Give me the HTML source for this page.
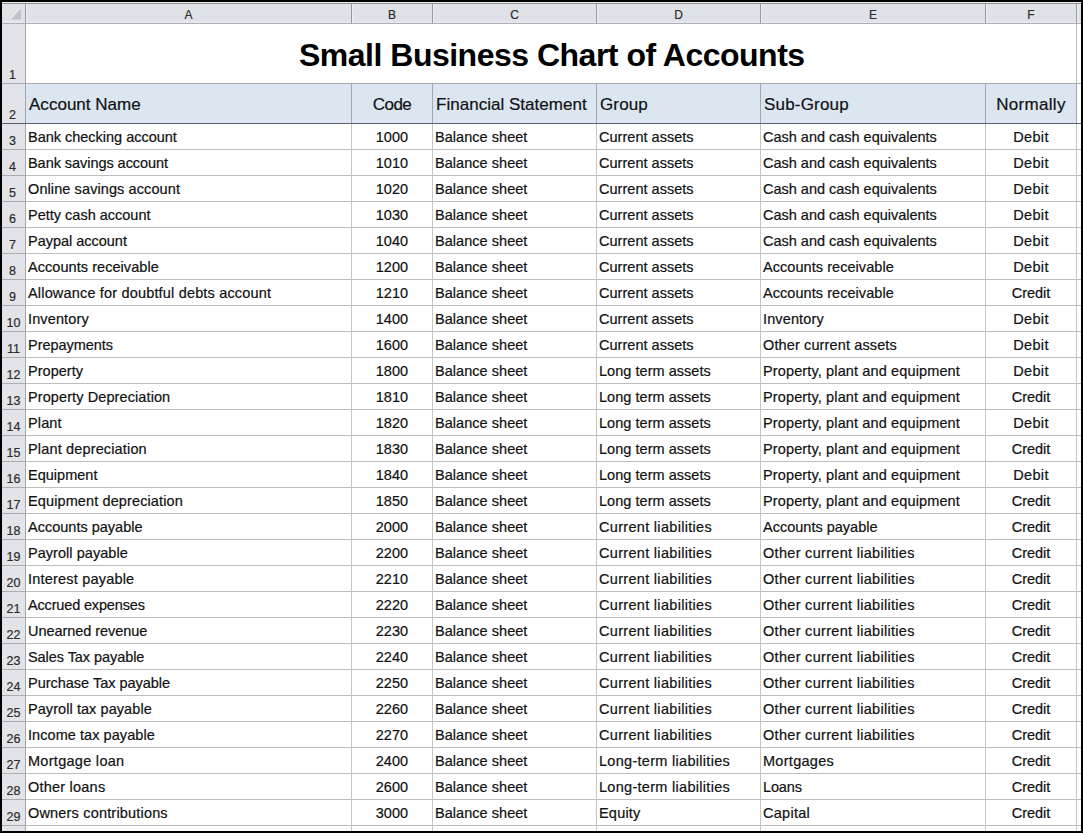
<!DOCTYPE html>
<html><head><meta charset="utf-8"><style>
html,body{margin:0;padding:0;width:1083px;height:833px;overflow:hidden;background:#fff}
#s{position:relative;width:1083px;height:833px;overflow:hidden}
#s div{position:absolute}
#s span{position:absolute;white-space:nowrap;font-family:"Liberation Sans",sans-serif;line-height:1}
.ch{font-size:12px;color:#2c2c2c;-webkit-text-stroke:0.2px #2c2c2c}
.rn{font-size:12.5px;color:#2c2c2c;-webkit-text-stroke:0.2px #2c2c2c}
.title{font-size:32px;font-weight:700;color:#000;letter-spacing:-0.5px}
.hd{font-size:17px;color:#111;-webkit-text-stroke:0.2px #111}
.td{font-size:14.5px;color:#111111;-webkit-text-stroke:0.2px #111111}
</style></head><body><div id="s">
<div style="left:0px;top:0px;width:1083px;height:833px;background:#ffffff;"></div>
<div style="left:2px;top:2px;width:1079px;height:22px;background:#dfe3e7;"></div>
<div style="left:2px;top:2px;width:1079px;height:1px;background:#eceef0;"></div>
<div style="left:2px;top:3px;width:1079px;height:1px;background:#8e9195;"></div>
<div style="left:2px;top:16px;width:1079px;height:5px;background:#e0e1e8;"></div>
<div style="left:2px;top:21px;width:1079px;height:2px;background:#e6e7ea;"></div>
<div style="left:2px;top:23px;width:1079px;height:1px;background:#aeb1b5;"></div>
<div style="left:2px;top:24px;width:23px;height:807px;background:#e2e4e9;"></div>
<div style="left:26px;top:84px;width:1050px;height:39px;background:#dce6f1;"></div>
<div style="left:25px;top:4px;width:1px;height:19px;background:#96999d;"></div>
<div style="left:26px;top:4px;width:1px;height:19px;background:#eceef1;"></div>
<div style="left:351px;top:4px;width:1px;height:19px;background:#96999d;"></div>
<div style="left:352px;top:4px;width:1px;height:19px;background:#eceef1;"></div>
<div style="left:432px;top:4px;width:1px;height:19px;background:#96999d;"></div>
<div style="left:433px;top:4px;width:1px;height:19px;background:#eceef1;"></div>
<div style="left:596px;top:4px;width:1px;height:19px;background:#96999d;"></div>
<div style="left:597px;top:4px;width:1px;height:19px;background:#eceef1;"></div>
<div style="left:760px;top:4px;width:1px;height:19px;background:#96999d;"></div>
<div style="left:761px;top:4px;width:1px;height:19px;background:#eceef1;"></div>
<div style="left:985px;top:4px;width:1px;height:19px;background:#96999d;"></div>
<div style="left:986px;top:4px;width:1px;height:19px;background:#eceef1;"></div>
<div style="left:1076px;top:4px;width:1px;height:19px;background:#96999d;"></div>
<div style="left:1077px;top:4px;width:1px;height:19px;background:#eceef1;"></div>
<svg style="position:absolute;left:0;top:0" width="30" height="30"><line x1="9.5" y1="19.5" x2="20.5" y2="8" stroke="#eceef1" stroke-width="1"/><polygon points="21,8.5 21,19.5 11,19.5" fill="#bfc2c6"/></svg>
<div style="left:25px;top:24px;width:1px;height:807px;background:#a3a6ad;"></div>
<div style="left:26px;top:83px;width:1055px;height:1px;background:#a9adb1;"></div>
<div style="left:2px;top:83px;width:23px;height:1px;background:#abaeb2;"></div>
<div style="left:26px;top:149px;width:1055px;height:1px;background:#bdbdbd;"></div>
<div style="left:2px;top:149px;width:23px;height:1px;background:#abaeb2;"></div>
<div style="left:26px;top:175px;width:1055px;height:1px;background:#bdbdbd;"></div>
<div style="left:2px;top:175px;width:23px;height:1px;background:#abaeb2;"></div>
<div style="left:26px;top:201px;width:1055px;height:1px;background:#bdbdbd;"></div>
<div style="left:2px;top:201px;width:23px;height:1px;background:#abaeb2;"></div>
<div style="left:26px;top:227px;width:1055px;height:1px;background:#bdbdbd;"></div>
<div style="left:2px;top:227px;width:23px;height:1px;background:#abaeb2;"></div>
<div style="left:26px;top:253px;width:1055px;height:1px;background:#bdbdbd;"></div>
<div style="left:2px;top:253px;width:23px;height:1px;background:#abaeb2;"></div>
<div style="left:26px;top:279px;width:1055px;height:1px;background:#bdbdbd;"></div>
<div style="left:2px;top:279px;width:23px;height:1px;background:#abaeb2;"></div>
<div style="left:26px;top:305px;width:1055px;height:1px;background:#bdbdbd;"></div>
<div style="left:2px;top:305px;width:23px;height:1px;background:#abaeb2;"></div>
<div style="left:26px;top:331px;width:1055px;height:1px;background:#bdbdbd;"></div>
<div style="left:2px;top:331px;width:23px;height:1px;background:#abaeb2;"></div>
<div style="left:26px;top:357px;width:1055px;height:1px;background:#bdbdbd;"></div>
<div style="left:2px;top:357px;width:23px;height:1px;background:#abaeb2;"></div>
<div style="left:26px;top:383px;width:1055px;height:1px;background:#bdbdbd;"></div>
<div style="left:2px;top:383px;width:23px;height:1px;background:#abaeb2;"></div>
<div style="left:26px;top:409px;width:1055px;height:1px;background:#bdbdbd;"></div>
<div style="left:2px;top:409px;width:23px;height:1px;background:#abaeb2;"></div>
<div style="left:26px;top:435px;width:1055px;height:1px;background:#bdbdbd;"></div>
<div style="left:2px;top:435px;width:23px;height:1px;background:#abaeb2;"></div>
<div style="left:26px;top:461px;width:1055px;height:1px;background:#bdbdbd;"></div>
<div style="left:2px;top:461px;width:23px;height:1px;background:#abaeb2;"></div>
<div style="left:26px;top:487px;width:1055px;height:1px;background:#bdbdbd;"></div>
<div style="left:2px;top:487px;width:23px;height:1px;background:#abaeb2;"></div>
<div style="left:26px;top:513px;width:1055px;height:1px;background:#bdbdbd;"></div>
<div style="left:2px;top:513px;width:23px;height:1px;background:#abaeb2;"></div>
<div style="left:26px;top:539px;width:1055px;height:1px;background:#bdbdbd;"></div>
<div style="left:2px;top:539px;width:23px;height:1px;background:#abaeb2;"></div>
<div style="left:26px;top:565px;width:1055px;height:1px;background:#bdbdbd;"></div>
<div style="left:2px;top:565px;width:23px;height:1px;background:#abaeb2;"></div>
<div style="left:26px;top:591px;width:1055px;height:1px;background:#bdbdbd;"></div>
<div style="left:2px;top:591px;width:23px;height:1px;background:#abaeb2;"></div>
<div style="left:26px;top:617px;width:1055px;height:1px;background:#bdbdbd;"></div>
<div style="left:2px;top:617px;width:23px;height:1px;background:#abaeb2;"></div>
<div style="left:26px;top:643px;width:1055px;height:1px;background:#bdbdbd;"></div>
<div style="left:2px;top:643px;width:23px;height:1px;background:#abaeb2;"></div>
<div style="left:26px;top:669px;width:1055px;height:1px;background:#bdbdbd;"></div>
<div style="left:2px;top:669px;width:23px;height:1px;background:#abaeb2;"></div>
<div style="left:26px;top:695px;width:1055px;height:1px;background:#bdbdbd;"></div>
<div style="left:2px;top:695px;width:23px;height:1px;background:#abaeb2;"></div>
<div style="left:26px;top:721px;width:1055px;height:1px;background:#bdbdbd;"></div>
<div style="left:2px;top:721px;width:23px;height:1px;background:#abaeb2;"></div>
<div style="left:26px;top:747px;width:1055px;height:1px;background:#bdbdbd;"></div>
<div style="left:2px;top:747px;width:23px;height:1px;background:#abaeb2;"></div>
<div style="left:26px;top:773px;width:1055px;height:1px;background:#bdbdbd;"></div>
<div style="left:2px;top:773px;width:23px;height:1px;background:#abaeb2;"></div>
<div style="left:26px;top:799px;width:1055px;height:1px;background:#bdbdbd;"></div>
<div style="left:2px;top:799px;width:23px;height:1px;background:#abaeb2;"></div>
<div style="left:26px;top:825px;width:1055px;height:1px;background:#bdbdbd;"></div>
<div style="left:2px;top:825px;width:23px;height:1px;background:#abaeb2;"></div>
<div style="left:351px;top:84px;width:1px;height:747px;background:#c6c6c6;"></div>
<div style="left:351px;top:84px;width:1px;height:39px;background:#9ea7b2;"></div>
<div style="left:432px;top:84px;width:1px;height:747px;background:#c6c6c6;"></div>
<div style="left:432px;top:84px;width:1px;height:39px;background:#9ea7b2;"></div>
<div style="left:596px;top:84px;width:1px;height:747px;background:#c6c6c6;"></div>
<div style="left:596px;top:84px;width:1px;height:39px;background:#9ea7b2;"></div>
<div style="left:760px;top:84px;width:1px;height:747px;background:#c6c6c6;"></div>
<div style="left:760px;top:84px;width:1px;height:39px;background:#9ea7b2;"></div>
<div style="left:985px;top:84px;width:1px;height:747px;background:#c6c6c6;"></div>
<div style="left:985px;top:84px;width:1px;height:39px;background:#9ea7b2;"></div>
<div style="left:1076px;top:84px;width:1px;height:747px;background:#c6c6c6;"></div>
<div style="left:1076px;top:84px;width:1px;height:39px;background:#9ea7b2;"></div>
<div style="left:1076px;top:24px;width:1px;height:60px;background:#bdbdbd;"></div>
<div style="left:2px;top:123px;width:1079px;height:1px;background:#5b6167;"></div>
<div style="left:0px;top:0px;width:1083px;height:2px;background:#000;"></div>
<div style="left:0px;top:831px;width:1083px;height:2px;background:#000;"></div>
<div style="left:0px;top:0px;width:2px;height:833px;background:#000;"></div>
<div style="left:1081px;top:0px;width:2px;height:833px;background:#000;"></div>
<span class="ch" style="left:26px;top:9px;width:325px;text-align:center;">A</span>
<span class="ch" style="left:352px;top:9px;width:80px;text-align:center;">B</span>
<span class="ch" style="left:433px;top:9px;width:163px;text-align:center;">C</span>
<span class="ch" style="left:597px;top:9px;width:163px;text-align:center;">D</span>
<span class="ch" style="left:761px;top:9px;width:224px;text-align:center;">E</span>
<span class="ch" style="left:986px;top:9px;width:90px;text-align:center;">F</span>
<span class="rn" style="left:1px;top:69px;width:23px;text-align:center;">1</span>
<span class="rn" style="left:1px;top:109px;width:23px;text-align:center;">2</span>
<span class="rn" style="left:1px;top:135px;width:23px;text-align:center;">3</span>
<span class="rn" style="left:1px;top:161px;width:23px;text-align:center;">4</span>
<span class="rn" style="left:1px;top:187px;width:23px;text-align:center;">5</span>
<span class="rn" style="left:1px;top:213px;width:23px;text-align:center;">6</span>
<span class="rn" style="left:1px;top:239px;width:23px;text-align:center;">7</span>
<span class="rn" style="left:1px;top:265px;width:23px;text-align:center;">8</span>
<span class="rn" style="left:1px;top:291px;width:23px;text-align:center;">9</span>
<span class="rn" style="left:2px;top:317px;width:23px;text-align:center;">10</span>
<span class="rn" style="left:2px;top:343px;width:23px;text-align:center;">11</span>
<span class="rn" style="left:2px;top:369px;width:23px;text-align:center;">12</span>
<span class="rn" style="left:2px;top:395px;width:23px;text-align:center;">13</span>
<span class="rn" style="left:2px;top:421px;width:23px;text-align:center;">14</span>
<span class="rn" style="left:2px;top:447px;width:23px;text-align:center;">15</span>
<span class="rn" style="left:2px;top:473px;width:23px;text-align:center;">16</span>
<span class="rn" style="left:2px;top:499px;width:23px;text-align:center;">17</span>
<span class="rn" style="left:2px;top:525px;width:23px;text-align:center;">18</span>
<span class="rn" style="left:2px;top:551px;width:23px;text-align:center;">19</span>
<span class="rn" style="left:2px;top:577px;width:23px;text-align:center;">20</span>
<span class="rn" style="left:2px;top:603px;width:23px;text-align:center;">21</span>
<span class="rn" style="left:2px;top:629px;width:23px;text-align:center;">22</span>
<span class="rn" style="left:2px;top:655px;width:23px;text-align:center;">23</span>
<span class="rn" style="left:2px;top:681px;width:23px;text-align:center;">24</span>
<span class="rn" style="left:2px;top:707px;width:23px;text-align:center;">25</span>
<span class="rn" style="left:2px;top:733px;width:23px;text-align:center;">26</span>
<span class="rn" style="left:2px;top:759px;width:23px;text-align:center;">27</span>
<span class="rn" style="left:2px;top:785px;width:23px;text-align:center;">28</span>
<span class="rn" style="left:2px;top:811px;width:23px;text-align:center;">29</span>
<span class="rn" style="left:2px;top:837px;width:23px;text-align:center;">30</span>
<span class="title" style="left:299px;top:39px;">Small Business Chart of Accounts</span>
<span class="hd" style="left:29px;top:96px;letter-spacing:0.021px;">Account Name</span>
<span class="hd" style="left:352px;top:96px;letter-spacing:-0.581px;width:80px;text-align:center;">Code</span>
<span class="hd" style="left:436px;top:96px;letter-spacing:0.022px;">Financial Statement</span>
<span class="hd" style="left:600px;top:96px;letter-spacing:0.126px;">Group</span>
<span class="hd" style="left:764px;top:96px;letter-spacing:0.190px;">Sub-Group</span>
<span class="hd" style="left:986px;top:96px;letter-spacing:0.317px;width:90px;text-align:center;">Normally</span>
<span class="td" style="left:28px;top:130px;letter-spacing:-0.013px;">Bank checking account</span>
<span class="td" style="left:352px;top:130px;letter-spacing:0.060px;width:80px;text-align:center;">1000</span>
<span class="td" style="left:435px;top:130px;letter-spacing:0.042px;">Balance sheet</span>
<span class="td" style="left:599px;top:130px;letter-spacing:0.024px;">Current assets</span>
<span class="td" style="left:763px;top:130px;letter-spacing:-0.010px;">Cash and cash equivalents</span>
<span class="td" style="left:986px;top:130px;letter-spacing:0.348px;width:90px;text-align:center;">Debit</span>
<span class="td" style="left:28px;top:156px;letter-spacing:-0.050px;">Bank savings account</span>
<span class="td" style="left:352px;top:156px;letter-spacing:0.060px;width:80px;text-align:center;">1010</span>
<span class="td" style="left:435px;top:156px;letter-spacing:0.042px;">Balance sheet</span>
<span class="td" style="left:599px;top:156px;letter-spacing:0.024px;">Current assets</span>
<span class="td" style="left:763px;top:156px;letter-spacing:-0.010px;">Cash and cash equivalents</span>
<span class="td" style="left:986px;top:156px;letter-spacing:0.348px;width:90px;text-align:center;">Debit</span>
<span class="td" style="left:28px;top:182px;letter-spacing:0.097px;">Online savings account</span>
<span class="td" style="left:352px;top:182px;letter-spacing:0.060px;width:80px;text-align:center;">1020</span>
<span class="td" style="left:435px;top:182px;letter-spacing:0.042px;">Balance sheet</span>
<span class="td" style="left:599px;top:182px;letter-spacing:0.024px;">Current assets</span>
<span class="td" style="left:763px;top:182px;letter-spacing:-0.010px;">Cash and cash equivalents</span>
<span class="td" style="left:986px;top:182px;letter-spacing:0.348px;width:90px;text-align:center;">Debit</span>
<span class="td" style="left:28px;top:208px;letter-spacing:0.000px;">Petty cash account</span>
<span class="td" style="left:352px;top:208px;letter-spacing:0.060px;width:80px;text-align:center;">1030</span>
<span class="td" style="left:435px;top:208px;letter-spacing:0.042px;">Balance sheet</span>
<span class="td" style="left:599px;top:208px;letter-spacing:0.024px;">Current assets</span>
<span class="td" style="left:763px;top:208px;letter-spacing:-0.010px;">Cash and cash equivalents</span>
<span class="td" style="left:986px;top:208px;letter-spacing:0.348px;width:90px;text-align:center;">Debit</span>
<span class="td" style="left:28px;top:234px;letter-spacing:-0.016px;">Paypal account</span>
<span class="td" style="left:352px;top:234px;letter-spacing:0.060px;width:80px;text-align:center;">1040</span>
<span class="td" style="left:435px;top:234px;letter-spacing:0.042px;">Balance sheet</span>
<span class="td" style="left:599px;top:234px;letter-spacing:0.024px;">Current assets</span>
<span class="td" style="left:763px;top:234px;letter-spacing:-0.010px;">Cash and cash equivalents</span>
<span class="td" style="left:986px;top:234px;letter-spacing:0.348px;width:90px;text-align:center;">Debit</span>
<span class="td" style="left:28px;top:260px;letter-spacing:0.054px;">Accounts receivable</span>
<span class="td" style="left:352px;top:260px;letter-spacing:0.060px;width:80px;text-align:center;">1200</span>
<span class="td" style="left:435px;top:260px;letter-spacing:0.042px;">Balance sheet</span>
<span class="td" style="left:599px;top:260px;letter-spacing:0.024px;">Current assets</span>
<span class="td" style="left:763px;top:260px;letter-spacing:0.054px;">Accounts receivable</span>
<span class="td" style="left:986px;top:260px;letter-spacing:0.348px;width:90px;text-align:center;">Debit</span>
<span class="td" style="left:28px;top:286px;letter-spacing:0.172px;">Allowance for doubtful debts account</span>
<span class="td" style="left:352px;top:286px;letter-spacing:0.060px;width:80px;text-align:center;">1210</span>
<span class="td" style="left:435px;top:286px;letter-spacing:0.042px;">Balance sheet</span>
<span class="td" style="left:599px;top:286px;letter-spacing:0.024px;">Current assets</span>
<span class="td" style="left:763px;top:286px;letter-spacing:0.054px;">Accounts receivable</span>
<span class="td" style="left:986px;top:286px;letter-spacing:-0.034px;width:90px;text-align:center;">Credit</span>
<span class="td" style="left:28px;top:312px;letter-spacing:0.126px;">Inventory</span>
<span class="td" style="left:352px;top:312px;letter-spacing:0.060px;width:80px;text-align:center;">1400</span>
<span class="td" style="left:435px;top:312px;letter-spacing:0.042px;">Balance sheet</span>
<span class="td" style="left:599px;top:312px;letter-spacing:0.024px;">Current assets</span>
<span class="td" style="left:763px;top:312px;letter-spacing:0.126px;">Inventory</span>
<span class="td" style="left:986px;top:312px;letter-spacing:0.348px;width:90px;text-align:center;">Debit</span>
<span class="td" style="left:28px;top:338px;letter-spacing:-0.035px;">Prepayments</span>
<span class="td" style="left:352px;top:338px;letter-spacing:0.060px;width:80px;text-align:center;">1600</span>
<span class="td" style="left:435px;top:338px;letter-spacing:0.042px;">Balance sheet</span>
<span class="td" style="left:599px;top:338px;letter-spacing:0.024px;">Current assets</span>
<span class="td" style="left:763px;top:338px;letter-spacing:0.126px;">Other current assets</span>
<span class="td" style="left:986px;top:338px;letter-spacing:0.348px;width:90px;text-align:center;">Debit</span>
<span class="td" style="left:28px;top:364px;letter-spacing:0.033px;">Property</span>
<span class="td" style="left:352px;top:364px;letter-spacing:0.060px;width:80px;text-align:center;">1800</span>
<span class="td" style="left:435px;top:364px;letter-spacing:0.042px;">Balance sheet</span>
<span class="td" style="left:599px;top:364px;letter-spacing:0.037px;">Long term assets</span>
<span class="td" style="left:763px;top:364px;letter-spacing:0.130px;">Property, plant and equipment</span>
<span class="td" style="left:986px;top:364px;letter-spacing:0.348px;width:90px;text-align:center;">Debit</span>
<span class="td" style="left:28px;top:390px;letter-spacing:0.097px;">Property Depreciation</span>
<span class="td" style="left:352px;top:390px;letter-spacing:0.060px;width:80px;text-align:center;">1810</span>
<span class="td" style="left:435px;top:390px;letter-spacing:0.042px;">Balance sheet</span>
<span class="td" style="left:599px;top:390px;letter-spacing:0.037px;">Long term assets</span>
<span class="td" style="left:763px;top:390px;letter-spacing:0.130px;">Property, plant and equipment</span>
<span class="td" style="left:986px;top:390px;letter-spacing:-0.034px;width:90px;text-align:center;">Credit</span>
<span class="td" style="left:28px;top:416px;letter-spacing:0.129px;">Plant</span>
<span class="td" style="left:352px;top:416px;letter-spacing:0.060px;width:80px;text-align:center;">1820</span>
<span class="td" style="left:435px;top:416px;letter-spacing:0.042px;">Balance sheet</span>
<span class="td" style="left:599px;top:416px;letter-spacing:0.037px;">Long term assets</span>
<span class="td" style="left:763px;top:416px;letter-spacing:0.130px;">Property, plant and equipment</span>
<span class="td" style="left:986px;top:416px;letter-spacing:0.348px;width:90px;text-align:center;">Debit</span>
<span class="td" style="left:28px;top:442px;letter-spacing:0.153px;">Plant depreciation</span>
<span class="td" style="left:352px;top:442px;letter-spacing:0.060px;width:80px;text-align:center;">1830</span>
<span class="td" style="left:435px;top:442px;letter-spacing:0.042px;">Balance sheet</span>
<span class="td" style="left:599px;top:442px;letter-spacing:0.037px;">Long term assets</span>
<span class="td" style="left:763px;top:442px;letter-spacing:0.130px;">Property, plant and equipment</span>
<span class="td" style="left:986px;top:442px;letter-spacing:-0.034px;width:90px;text-align:center;">Credit</span>
<span class="td" style="left:28px;top:468px;letter-spacing:0.011px;">Equipment</span>
<span class="td" style="left:352px;top:468px;letter-spacing:0.060px;width:80px;text-align:center;">1840</span>
<span class="td" style="left:435px;top:468px;letter-spacing:0.042px;">Balance sheet</span>
<span class="td" style="left:599px;top:468px;letter-spacing:0.037px;">Long term assets</span>
<span class="td" style="left:763px;top:468px;letter-spacing:0.130px;">Property, plant and equipment</span>
<span class="td" style="left:986px;top:468px;letter-spacing:0.348px;width:90px;text-align:center;">Debit</span>
<span class="td" style="left:28px;top:494px;letter-spacing:0.113px;">Equipment depreciation</span>
<span class="td" style="left:352px;top:494px;letter-spacing:0.060px;width:80px;text-align:center;">1850</span>
<span class="td" style="left:435px;top:494px;letter-spacing:0.042px;">Balance sheet</span>
<span class="td" style="left:599px;top:494px;letter-spacing:0.037px;">Long term assets</span>
<span class="td" style="left:763px;top:494px;letter-spacing:0.130px;">Property, plant and equipment</span>
<span class="td" style="left:986px;top:494px;letter-spacing:-0.034px;width:90px;text-align:center;">Credit</span>
<span class="td" style="left:28px;top:520px;letter-spacing:0.002px;">Accounts payable</span>
<span class="td" style="left:352px;top:520px;letter-spacing:0.060px;width:80px;text-align:center;">2000</span>
<span class="td" style="left:435px;top:520px;letter-spacing:0.042px;">Balance sheet</span>
<span class="td" style="left:599px;top:520px;letter-spacing:0.308px;">Current liabilities</span>
<span class="td" style="left:763px;top:520px;letter-spacing:0.002px;">Accounts payable</span>
<span class="td" style="left:986px;top:520px;letter-spacing:-0.034px;width:90px;text-align:center;">Credit</span>
<span class="td" style="left:28px;top:546px;letter-spacing:0.044px;">Payroll payable</span>
<span class="td" style="left:352px;top:546px;letter-spacing:0.060px;width:80px;text-align:center;">2200</span>
<span class="td" style="left:435px;top:546px;letter-spacing:0.042px;">Balance sheet</span>
<span class="td" style="left:599px;top:546px;letter-spacing:0.308px;">Current liabilities</span>
<span class="td" style="left:763px;top:546px;letter-spacing:0.301px;">Other current liabilities</span>
<span class="td" style="left:986px;top:546px;letter-spacing:-0.034px;width:90px;text-align:center;">Credit</span>
<span class="td" style="left:28px;top:572px;letter-spacing:0.198px;">Interest payable</span>
<span class="td" style="left:352px;top:572px;letter-spacing:0.060px;width:80px;text-align:center;">2210</span>
<span class="td" style="left:435px;top:572px;letter-spacing:0.042px;">Balance sheet</span>
<span class="td" style="left:599px;top:572px;letter-spacing:0.308px;">Current liabilities</span>
<span class="td" style="left:763px;top:572px;letter-spacing:0.301px;">Other current liabilities</span>
<span class="td" style="left:986px;top:572px;letter-spacing:-0.034px;width:90px;text-align:center;">Credit</span>
<span class="td" style="left:28px;top:598px;letter-spacing:-0.160px;">Accrued expenses</span>
<span class="td" style="left:352px;top:598px;letter-spacing:0.060px;width:80px;text-align:center;">2220</span>
<span class="td" style="left:435px;top:598px;letter-spacing:0.042px;">Balance sheet</span>
<span class="td" style="left:599px;top:598px;letter-spacing:0.308px;">Current liabilities</span>
<span class="td" style="left:763px;top:598px;letter-spacing:0.301px;">Other current liabilities</span>
<span class="td" style="left:986px;top:598px;letter-spacing:-0.034px;width:90px;text-align:center;">Credit</span>
<span class="td" style="left:28px;top:624px;letter-spacing:-0.050px;">Unearned revenue</span>
<span class="td" style="left:352px;top:624px;letter-spacing:0.060px;width:80px;text-align:center;">2230</span>
<span class="td" style="left:435px;top:624px;letter-spacing:0.042px;">Balance sheet</span>
<span class="td" style="left:599px;top:624px;letter-spacing:0.308px;">Current liabilities</span>
<span class="td" style="left:763px;top:624px;letter-spacing:0.301px;">Other current liabilities</span>
<span class="td" style="left:986px;top:624px;letter-spacing:-0.034px;width:90px;text-align:center;">Credit</span>
<span class="td" style="left:28px;top:650px;letter-spacing:-0.067px;">Sales Tax payable</span>
<span class="td" style="left:352px;top:650px;letter-spacing:0.060px;width:80px;text-align:center;">2240</span>
<span class="td" style="left:435px;top:650px;letter-spacing:0.042px;">Balance sheet</span>
<span class="td" style="left:599px;top:650px;letter-spacing:0.308px;">Current liabilities</span>
<span class="td" style="left:763px;top:650px;letter-spacing:0.301px;">Other current liabilities</span>
<span class="td" style="left:986px;top:650px;letter-spacing:-0.034px;width:90px;text-align:center;">Credit</span>
<span class="td" style="left:28px;top:676px;letter-spacing:-0.014px;">Purchase Tax payable</span>
<span class="td" style="left:352px;top:676px;letter-spacing:0.060px;width:80px;text-align:center;">2250</span>
<span class="td" style="left:435px;top:676px;letter-spacing:0.042px;">Balance sheet</span>
<span class="td" style="left:599px;top:676px;letter-spacing:0.308px;">Current liabilities</span>
<span class="td" style="left:763px;top:676px;letter-spacing:0.301px;">Other current liabilities</span>
<span class="td" style="left:986px;top:676px;letter-spacing:-0.034px;width:90px;text-align:center;">Credit</span>
<span class="td" style="left:28px;top:702px;letter-spacing:0.068px;">Payroll tax payable</span>
<span class="td" style="left:352px;top:702px;letter-spacing:0.060px;width:80px;text-align:center;">2260</span>
<span class="td" style="left:435px;top:702px;letter-spacing:0.042px;">Balance sheet</span>
<span class="td" style="left:599px;top:702px;letter-spacing:0.308px;">Current liabilities</span>
<span class="td" style="left:763px;top:702px;letter-spacing:0.301px;">Other current liabilities</span>
<span class="td" style="left:986px;top:702px;letter-spacing:-0.034px;width:90px;text-align:center;">Credit</span>
<span class="td" style="left:28px;top:728px;letter-spacing:0.061px;">Income tax payable</span>
<span class="td" style="left:352px;top:728px;letter-spacing:0.060px;width:80px;text-align:center;">2270</span>
<span class="td" style="left:435px;top:728px;letter-spacing:0.042px;">Balance sheet</span>
<span class="td" style="left:599px;top:728px;letter-spacing:0.308px;">Current liabilities</span>
<span class="td" style="left:763px;top:728px;letter-spacing:0.301px;">Other current liabilities</span>
<span class="td" style="left:986px;top:728px;letter-spacing:-0.034px;width:90px;text-align:center;">Credit</span>
<span class="td" style="left:28px;top:754px;letter-spacing:0.287px;">Mortgage loan</span>
<span class="td" style="left:352px;top:754px;letter-spacing:0.060px;width:80px;text-align:center;">2400</span>
<span class="td" style="left:435px;top:754px;letter-spacing:0.042px;">Balance sheet</span>
<span class="td" style="left:599px;top:754px;letter-spacing:0.293px;">Long-term liabilities</span>
<span class="td" style="left:763px;top:754px;letter-spacing:0.287px;">Mortgages</span>
<span class="td" style="left:986px;top:754px;letter-spacing:-0.034px;width:90px;text-align:center;">Credit</span>
<span class="td" style="left:28px;top:780px;letter-spacing:0.220px;">Other loans</span>
<span class="td" style="left:352px;top:780px;letter-spacing:0.060px;width:80px;text-align:center;">2600</span>
<span class="td" style="left:435px;top:780px;letter-spacing:0.042px;">Balance sheet</span>
<span class="td" style="left:599px;top:780px;letter-spacing:0.293px;">Long-term liabilities</span>
<span class="td" style="left:763px;top:780px;letter-spacing:-0.154px;">Loans</span>
<span class="td" style="left:986px;top:780px;letter-spacing:-0.034px;width:90px;text-align:center;">Credit</span>
<span class="td" style="left:28px;top:806px;letter-spacing:0.180px;">Owners contributions</span>
<span class="td" style="left:352px;top:806px;letter-spacing:0.060px;width:80px;text-align:center;">3000</span>
<span class="td" style="left:435px;top:806px;letter-spacing:0.042px;">Balance sheet</span>
<span class="td" style="left:599px;top:806px;letter-spacing:0.200px;">Equity</span>
<span class="td" style="left:763px;top:806px;letter-spacing:0.272px;">Capital</span>
<span class="td" style="left:986px;top:806px;letter-spacing:-0.034px;width:90px;text-align:center;">Credit</span>
</div></body></html>
